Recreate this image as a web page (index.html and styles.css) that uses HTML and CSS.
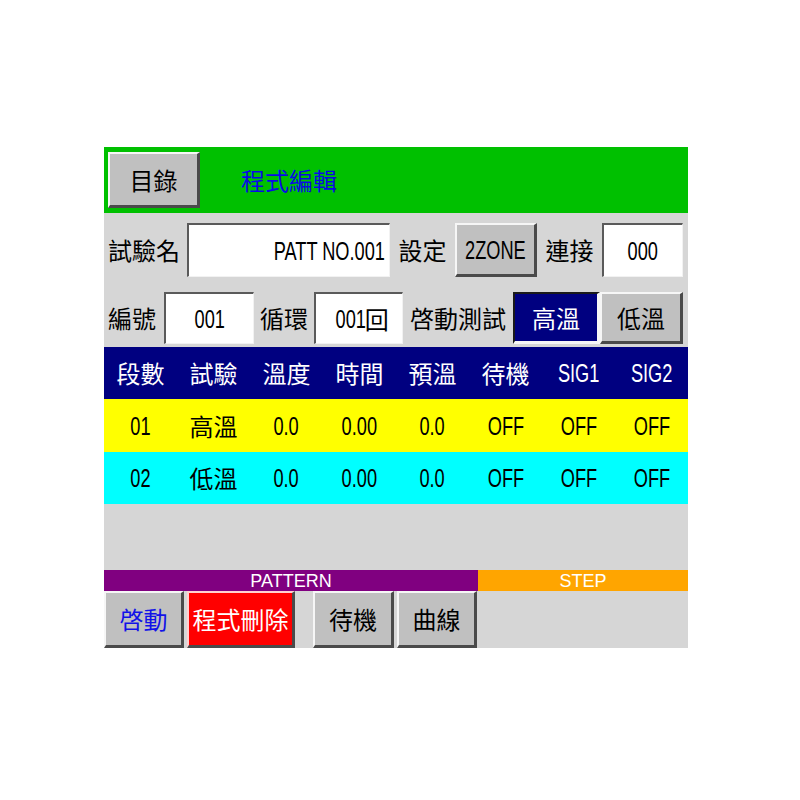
FILE: index.html
```html
<!DOCTYPE html>
<html lang="zh-Hant">
<head>
<meta charset="utf-8">
<title>程式編輯</title>
<link rel="stylesheet" href="styles.css">
</head>
<body>
<div class="screen">
  <div class="titlebar">
    <div class="btn btn-menu">目錄</div>
    <div class="title">程式編輯</div>
  </div>

  <div class="row row1">
    <div class="lbl lbl-name">試驗名</div>
    <div class="field field-name"><span class="num num-r">PATT NO.001</span></div>
    <div class="lbl lbl-set">設定</div>
    <div class="btn btn-zone"><span class="num">2ZONE</span></div>
    <div class="lbl lbl-link">連接</div>
    <div class="field field-link"><span class="num">000</span></div>
  </div>

  <div class="row row2">
    <div class="lbl lbl-no">編號</div>
    <div class="field field-no"><span class="num">001</span></div>
    <div class="lbl lbl-loop">循環</div>
    <div class="field field-loop"><span class="num">001</span>回</div>
    <div class="lbl lbl-test">啓動測試</div>
    <div class="btn btn-hi pressed">高溫</div>
    <div class="btn btn-lo">低溫</div>
  </div>

  <div class="grid thead">
    <div class="cell">段數</div>
    <div class="cell">試驗</div>
    <div class="cell">溫度</div>
    <div class="cell">時間</div>
    <div class="cell">預溫</div>
    <div class="cell">待機</div>
    <div class="cell"><span class="num">SIG1</span></div>
    <div class="cell"><span class="num">SIG2</span></div>
  </div>
  <div class="grid trow yellow">
    <div class="cell"><span class="num">01</span></div>
    <div class="cell">高溫</div>
    <div class="cell"><span class="num">0.0</span></div>
    <div class="cell"><span class="num">0.00</span></div>
    <div class="cell"><span class="num">0.0</span></div>
    <div class="cell"><span class="num">OFF</span></div>
    <div class="cell"><span class="num">OFF</span></div>
    <div class="cell"><span class="num">OFF</span></div>
  </div>
  <div class="grid trow cyan">
    <div class="cell"><span class="num">02</span></div>
    <div class="cell">低溫</div>
    <div class="cell"><span class="num">0.0</span></div>
    <div class="cell"><span class="num">0.00</span></div>
    <div class="cell"><span class="num">0.0</span></div>
    <div class="cell"><span class="num">OFF</span></div>
    <div class="cell"><span class="num">OFF</span></div>
    <div class="cell"><span class="num">OFF</span></div>
  </div>

  <div class="spacer"></div>

  <div class="bars">
    <div class="bar bar-pattern">PATTERN</div>
    <div class="bar bar-step">STEP</div>
  </div>

  <div class="actions">
    <div class="btn btn-start">啓動</div>
    <div class="btn btn-del">程式刪除</div>
    <div class="btn btn-wait">待機</div>
    <div class="btn btn-curve">曲線</div>
  </div>
</div>
</body>
</html>
```

FILE: styles.css
```css
* {
  box-sizing: border-box;
}

html, body {
  margin: 0;
  padding: 0;
  background: #ffffff;
}

body {
  font-family: "Noto Sans CJK TC", "Noto Sans CJK SC", "Liberation Sans", sans-serif;
  font-size: 24px;
  line-height: 1;
  color: #000;
}

.screen {
  margin: 147px 0 0 104px;
  width: 584px;
  height: 501px;
  background: #d6d6d6;
  display: flex;
  flex-direction: column;
}

/* generic pieces */
.btn {
  display: flex;
  align-items: center;
  justify-content: center;
  background: #c0c0c0;
  border-style: solid;
  border-width: 2px 3px 3px 2px;
  border-color: #f6f6f6 #4a4a4a #4a4a4a #f6f6f6;
  color: #000;
}

.btn.pressed {
  background: #000080;
  color: #fff;
  border-color: #1a1a1a #f6f6f6 #f6f6f6 #1a1a1a;
}

.field {
  display: flex;
  align-items: center;
  justify-content: center;
  background: #fff;
  border-style: solid;
  border-width: 2px 1px 1px 2px;
  border-color: #5a5a5a #f2f2f2 #f2f2f2 #5a5a5a;
}

.lbl {
  display: flex;
  align-items: center;
  justify-content: center;
  height: 100%;
}

.num {
  display: inline-block;
  font-family: "Liberation Sans", Arial, sans-serif;
  font-size: 26px;
  transform: scaleX(0.7);
  transform-origin: center;
  white-space: nowrap;
}

.num-r {
  transform-origin: right center;
}

/* title bar */
.titlebar {
  height: 66px;
  flex: none;
  background: #00c000;
  padding: 5px 4px;
  display: flex;
  align-items: flex-start;
}

.btn-menu {
  width: 92px;
  height: 56px;
}

.title {
  align-self: center;
  margin-left: 41px;
  color: #0a0ae6;
}

/* form rows */
.row {
  display: flex;
  flex: none;
}

.row1 {
  height: 54px;
  margin-top: 10px;
  padding-left: 4px;
}

.lbl-name {
  width: 79px;
  justify-content: flex-start;
}

.field-name {
  width: 203px;
  justify-content: flex-end;
  padding-right: 4px;
}

.lbl-set,
.lbl-link {
  width: 65px;
}

.btn-zone {
  width: 82px;
}

.field-link {
  width: 81px;
}

.row2 {
  height: 52px;
  margin-top: 15px;
}

.lbl-no {
  width: 60px;
  justify-content: flex-start;
  padding-left: 4px;
}

.field-no {
  width: 90px;
}

.lbl-loop {
  width: 60px;
}

.field-loop {
  width: 89px;
}

.field-loop .num {
  margin-right: -8px;
}

.lbl-test {
  width: 110px;
}

.btn-hi {
  width: 87px;
}

.btn-lo {
  width: 83px;
}

/* table */
.grid {
  display: grid;
  grid-template-columns: repeat(8, 73px);
  flex: none;
}

.cell {
  display: flex;
  align-items: center;
  justify-content: center;
}

.thead {
  margin-top: 3px;
  height: 52px;
  background: #000080;
  color: #fff;
}

.trow {
  height: 52px;
}

.yellow {
  height: 53px;
  background: #ffff00;
}

.cyan {
  background: #00ffff;
}

.spacer {
  flex: 1;
}

/* status bars */
.bars {
  display: flex;
  height: 21px;
  flex: none;
}

.bar {
  display: flex;
  align-items: center;
  justify-content: center;
  font-family: "Liberation Sans", Arial, sans-serif;
  font-size: 18px;
  color: #fff;
}

.bar-pattern {
  width: 374px;
  background: #800080;
}

.bar-step {
  flex: 1;
  background: #ffa500;
}

/* bottom actions */
.actions {
  display: flex;
  height: 57px;
  flex: none;
}

.btn-start {
  width: 80px;
  color: #1212e8;
}

.btn-del {
  width: 108px;
  margin-left: 3px;
  background: #ff0000;
  color: #fff;
  border-color: #ffd0d0 #4a4a4a #4a4a4a #ffd0d0;
}

.btn-wait {
  width: 81px;
  margin-left: 18px;
}

.btn-curve {
  width: 80px;
  margin-left: 3px;
}
```
